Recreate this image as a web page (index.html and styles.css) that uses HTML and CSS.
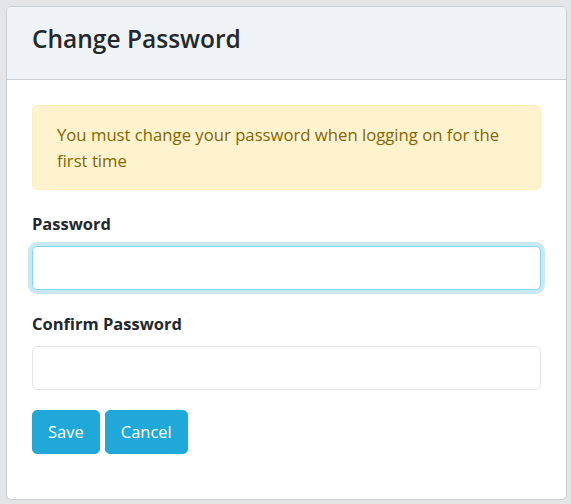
FILE: index.html
```html
<!DOCTYPE html>
<html lang="en">
<head>
<meta charset="utf-8">
<title>Change Password</title>
<link rel="stylesheet" href="styles.css">
</head>
<body>
<div class="card">
  <div class="card-header">
    <h4 class="card-title">Change Password</h4>
  </div>
  <div class="card-body">
    <div class="alert">You must change your password when logging on for the first time</div>
    <form class="form">
      <div class="form-group">
        <label class="label" for="pw">Password</label>
        <input class="input input-focus" id="pw" type="password">
      </div>
      <div class="form-group form-group-last">
        <label class="label" for="cpw">Confirm Password</label>
        <input class="input" id="cpw" type="password">
      </div>
      <div class="actions">
        <button type="button" class="btn">Save</button>
        <button type="button" class="btn">Cancel</button>
      </div>
    </form>
  </div>
</div>
</body>
</html>
```

FILE: styles.css
```css
html, body {
  margin: 0;
  padding: 0;
}
body {
  background: #e4e5e6;
  font-family: "Open Sans", "Noto Sans", sans-serif;
  font-size: 16.5px;
  line-height: 26px;
  color: #23282c;
  padding: 6px 4px 4px 6px;
}
.card {
  background: #fff;
  border: 1px solid #c8ced3;
  border-radius: 5px;
  overflow: hidden;
}
.card-header {
  background: #f0f3f5;
  border-bottom: 1px solid #c8ced3;
  padding: 16px 25px 15px;
  height: 41px;
}
.card-title {
  margin: 0;
  font-size: 24.5px;
  font-weight: 600;
  line-height: 31px;
  color: #23282c;
}
.card-body {
  padding: 25px 25px 25px;
}
.alert {
  background: #fff3cd;
  border: 1px solid #ffeeba;
  color: #856404;
  border-radius: 5px;
  padding: 16px 24px 15px;
  margin-bottom: 22px;
  font-size: 16.7px;
}
.form {
  margin: 0 0 20px;
}
.form-group {
  margin-bottom: 22px;
}
.form-group-last {
  margin-bottom: 20px;
}
.label {
  display: block;
  font-weight: 700;
  margin-bottom: 10px;
  line-height: 24px;
}
.input {
  display: block;
  box-sizing: border-box;
  width: 100%;
  height: 44px;
  margin: 0;
  padding: 7px 15px;
  border: 1px solid #e4e7ea;
  border-radius: 5px;
  background: #fff;
  font: inherit;
  outline: none;
}
.input-focus {
  border-color: #8ad4ee;
  box-shadow: 0 0 0 4px rgba(32, 168, 216, 0.25);
}
.actions {
  display: flex;
  gap: 5px;
}
.btn {
  height: 44px;
  padding: 0 15px;
  background: #20a8d8;
  border: 1px solid #20a8d8;
  border-radius: 5px;
  color: #fff;
  font: inherit;
  cursor: pointer;
}
```
